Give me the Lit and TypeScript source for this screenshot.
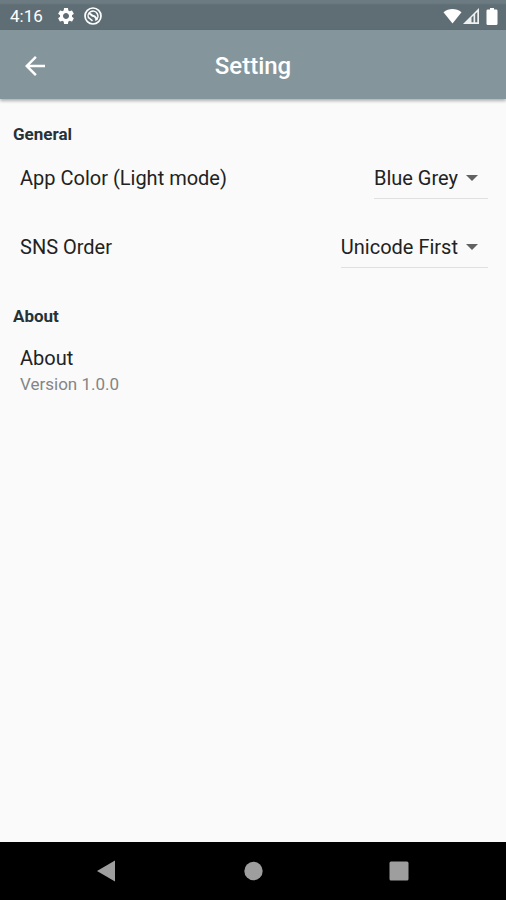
import { LitElement, html, css } from "lit";
import { customElement, property, state } from "lit/decorators.js";

@customElement("status-bar")
class StatusBar extends LitElement {
  static styles = css`
    :host {
      display: flex;
      align-items: center;
      justify-content: space-between;
      height: 30px;
      padding: 2px 8px 0 10px;
      box-sizing: border-box;
      background: linear-gradient(#6c7b82 3px, #5f6e75 5px);
      color: #fff;
      font-size: 17px;
    }
    .group {
      display: flex;
      align-items: center;
    }
    .left {
      gap: 13px;
    }
    .right {
      gap: 1px;
    }
    .icons {
      display: flex;
      gap: 7px;
    }
    svg {
      display: block;
    }
    .battery {
      margin-left: 6px;
    }
  `;

  render() {
    return html`
      <div class="group left">
        <span>4:16</span>
        <div class="icons">
          <svg width="20" height="20" viewBox="0 0 24 24" fill="#fff" aria-hidden="true">
            <path d="M19.14 12.94c.04-.3.06-.61.06-.94 0-.32-.02-.64-.07-.94l2.03-1.58c.18-.14.23-.41.12-.61l-1.92-3.32c-.12-.22-.37-.29-.59-.22l-2.39.96c-.5-.38-1.03-.7-1.62-.94l-.36-2.54c-.04-.24-.24-.41-.48-.41h-3.84c-.24 0-.43.17-.47.41l-.36 2.54c-.59.24-1.13.57-1.62.94l-2.39-.96c-.22-.08-.47 0-.59.22L2.74 8.87c-.12.21-.08.47.12.61l2.03 1.58c-.05.3-.09.63-.09.94s.02.64.07.94l-2.03 1.58c-.18.14-.23.41-.12.61l1.92 3.32c.12.22.37.29.59.22l2.39-.96c.5.38 1.03.7 1.62.94l.36 2.54c.05.24.24.41.48.41h3.84c.24 0 .44-.17.47-.41l.36-2.54c.59-.24 1.13-.56 1.62-.94l2.39.96c.22.08.47 0 .59-.22l1.92-3.32c.12-.22.07-.47-.12-.61l-2.01-1.58zM12 15.6c-1.98 0-3.6-1.62-3.6-3.6s1.62-3.6 3.6-3.6 3.6 1.62 3.6 3.6-1.62 3.6-3.6 3.6z" />
          </svg>
          <svg width="20" height="20" viewBox="0 0 20 20" fill="none" stroke="#fff" aria-hidden="true">
            <circle cx="10" cy="10" r="8" stroke-width="1.7" />
            <path d="M5.600 12.200A4.900 4.900 0 1 1 12.200 14.400" stroke-width="1.500" />
            <path d="M6 7.500C8 7.500 8.500 10 10.500 10S12.500 12.500 14.500 13.500" stroke-width="2" />
            <path d="M5.500 11.500L9.500 14.800" stroke-width="1.500" />
          </svg>
        </div>
      </div>
      <div class="group right">
        <svg width="19" height="16" viewBox="0 0 19 16" aria-hidden="true">
          <path d="M.5 4.200C5.800 0 13.200 0 18.500 4.200L9.500 15.500z" fill="#fff" />
        </svg>
        <svg width="16" height="16" viewBox="0 0 16 16" aria-hidden="true">
          <path d="M0 16L16 0V16zM8.500 9.500V14.300H10.500V7.600zM12.200 6V14.300H14.300V3.900z" fill="#fff" fill-rule="evenodd" fill-opacity=".9" />
        </svg>
        <svg class="battery" width="12" height="17" viewBox="0 0 12 17" aria-hidden="true">
          <path d="M4 0h4v1.500h2.200q1.300 0 1.300 1.300V15.700Q11.500 17 10.200 17H1.800Q.5 17 .5 15.700V2.800Q.5 1.500 1.800 1.500H4z" fill="#fff" />
        </svg>
      </div>
    `;
  }
}

@customElement("setting-select")
class SettingSelect extends LitElement {
  @property() label = "";
  @property({ attribute: false }) options: string[] = [];
  @state() private selected = 0;

  static styles = css`
    :host {
      display: flex;
      align-items: flex-start;
      justify-content: space-between;
      height: 69px;
      padding: 0 18px 0 20px;
      box-sizing: border-box;
    }
    label {
      line-height: 28px;
      font-size: 20px;
    }
    .field {
      display: grid;
      align-items: center;
      border-bottom: 1px solid #e0e0e0;
      padding-bottom: 6px;
    }
    select,
    svg {
      grid-area: 1 / 1;
    }
    select {
      appearance: none;
      field-sizing: content;
      height: 28px;
      margin: 0;
      padding: 0 30px 0 0;
      border: 0;
      background: transparent;
      color: inherit;
      font: inherit;
      font-size: 20px;
    }
    svg {
      justify-self: end;
      margin-right: 10px;
      pointer-events: none;
    }
  `;

  private pick(e: Event) {
    this.selected = (e.target as HTMLSelectElement).selectedIndex;
  }

  render() {
    return html`
      <label for="choice">${this.label}</label>
      <div class="field">
        <select id="choice" @change=${this.pick}>
          ${this.options.map((o, i) => html`<option ?selected=${i === this.selected}>${o}</option>`)}
        </select>
        <svg width="12" height="6" viewBox="0 0 12 6" aria-hidden="true">
          <path d="M0 0h12L6 6z" fill="#616161" />
        </svg>
      </div>
    `;
  }
}

@customElement("app-root")
class AppRoot extends LitElement {
  static styles = css`
    :host {
      display: flex;
      flex-direction: column;
      min-height: 100vh;
      background: #fafafa;
      color: #222;
      font-family: Roboto, "Liberation Sans", sans-serif;
    }
    header {
      display: grid;
      grid-template-columns: 1fr auto 1fr;
      align-items: center;
      height: 69px;
      padding: 2px 20px 0;
      box-sizing: border-box;
      background: #84969c;
      color: #fff;
      box-shadow: 0 2px 3px rgba(0, 0, 0, 0.3);
    }
    h1 {
      margin: 0;
      font-size: 24px;
      font-weight: 500;
      line-height: 32px;
    }
    button {
      display: flex;
      justify-content: center;
      padding: 0;
      border: 0;
      background: transparent;
    }
    .back {
      justify-self: start;
    }
    main {
      flex: 1;
      padding-top: 23px;
    }
    h2 {
      margin: 0;
      padding: 0 13px;
      color: #263238;
      font-size: 17px;
      font-weight: 700;
      line-height: 24px;
    }
    .rows {
      padding: 18px 0 2px;
    }
    .about {
      display: flex;
      flex-direction: column;
      gap: 2px;
      padding: 16px 20px;
      font-size: 20px;
      line-height: 28px;
    }
    .version {
      color: #858585;
      font-size: 17px;
      line-height: 20px;
    }
    nav {
      display: grid;
      grid-template-columns: repeat(3, 146px);
      justify-content: center;
      align-items: center;
      height: 58px;
      background: #000;
    }
  `;

  render() {
    return html`
      <status-bar></status-bar>
      <header>
        <button class="back" aria-label="Back">
          <svg width="30" height="30" viewBox="0 0 24 24" fill="#fff">
            <path d="M20 11H7.830l5.590-5.590L12 4l-8 8 8 8 1.410-1.410L7.830 13H20v-2z" />
          </svg>
        </button>
        <h1>Setting</h1>
      </header>
      <main>
        <h2>General</h2>
        <div class="rows">
          <setting-select label="App Color (Light mode)" .options=${["Blue Grey"]}></setting-select>
          <setting-select label="SNS Order" .options=${["Unicode First"]}></setting-select>
        </div>
        <h2>About</h2>
        <div class="about">
          <span>About</span>
          <span class="version">Version 1.0.0</span>
        </div>
      </main>
      <nav aria-label="System">
        <button aria-label="Back">
          <svg width="20" height="22" viewBox="0 0 20 22"><path d="M0 11L18 .5V21.500z" fill="#9e9e9e" /></svg>
        </button>
        <button aria-label="Home">
          <svg width="20" height="20" viewBox="0 0 20 20"><circle cx="10.500" cy="10" r="9.200" fill="#9e9e9e" /></svg>
        </button>
        <button aria-label="Recent apps">
          <svg width="20" height="20" viewBox="0 0 20 20"><rect x=".5" y=".5" width="19" height="19" rx="1.500" fill="#9e9e9e" /></svg>
        </button>
      </nav>
    `;
  }
}
